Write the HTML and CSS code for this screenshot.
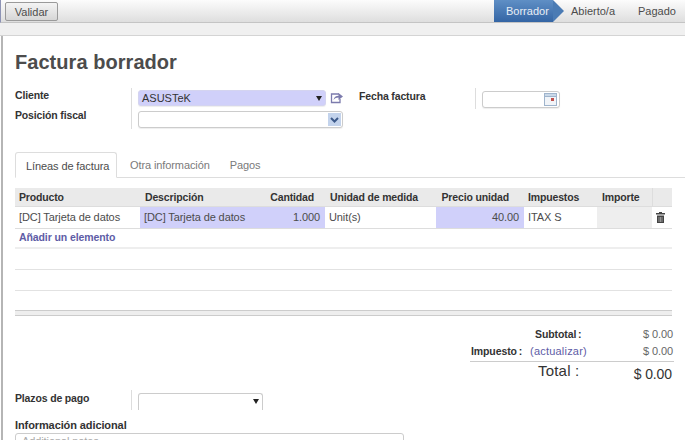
FILE: index.html
```html
<!DOCTYPE html>
<html lang="es">
<head>
	<meta charset="UTF-8">
	<title>Factura borrador</title>
	<link rel="stylesheet" href="styles.css">
</head>
<body>
	<div class="topbar">
		<button class="btn">Validar</button>
		<ul class="states">
			<li class="state active">Borrador</li>
			<li class="state">Abierto/a</li>
			<li class="state">Pagado</li>
		</ul>
	</div>
	<div class="band"></div>
	<div class="sheet">
		<h1>Factura borrador</h1>
		<div class="head_form">
			<div class="group group_left">
				<label class="lbl">Cliente</label>
				<div class="val val_client">
					<div class="field blue client">ASUSTeK<span class="caret"></span></div>
					<svg class="ext" width="13" height="12" viewBox="0 0 13 12"><path d="M9 2H1.500V10.500H10V7" fill="none" stroke="#7c7bad" stroke-width="1.300"/><path d="M3.500 8C4 5 6 3.800 8.500 3.800V1L13 4.500 8.500 8V5.500C6.500 5.500 5 6.200 3.500 8Z" fill="#7c7bad"/></svg>
				</div>
				<label class="lbl low">Posición fiscal</label>
				<div class="val val_fiscal">
					<div class="field fiscal"><span class="sel_btn"><svg width="9" height="6" viewBox="0 0 9 6"><path d="M1 1L4.500 4.500 8 1" fill="none" stroke="#3d5a8a" stroke-width="2"/></svg></span></div>
				</div>
			</div>
			<div class="group group_right">
				<label class="lbl mid">Fecha factura</label>
				<div class="val val_date">
					<div class="field date"><svg class="cal" width="13" height="13" viewBox="0 0 13 13"><rect width="13" height="13" fill="#9fb4cc"/><rect x="1" y="1" width="11" height="2" fill="#c9d8e8"/><rect x="1" y="4" width="11" height="8" fill="#f1f4f8"/><rect x="7" y="5" width="3" height="3" fill="#c0504d"/></svg></div>
				</div>
			</div>
		</div>
		<div class="tabs">
			<span class="tab active">Líneas de factura</span>
			<span class="tab">Otra información</span>
			<span class="tab">Pagos</span>
		</div>
		<table class="lines">
			<thead>
				<tr>
					<th class="c1">Producto</th>
					<th class="c2">Descripción</th>
					<th class="c3 num">Cantidad</th>
					<th class="c4">Unidad de medida</th>
					<th class="c5 num">Precio unidad</th>
					<th class="c6">Impuestos</th>
					<th class="c7">Importe</th>
					<th class="c8"></th>
				</tr>
			</thead>
			<tbody>
				<tr class="line">
					<td>[DC] Tarjeta de datos</td>
					<td class="req">[DC] Tarjeta de datos</td>
					<td class="req num">1.000</td>
					<td>Unit(s)</td>
					<td class="req num">40.00</td>
					<td>ITAX S</td>
					<td class="ro"></td>
					<td class="del"><svg width="9" height="11" viewBox="0 0 9 11"><path d="M3 0H6V1H9V2.500H0V1H3ZM1 3.500H8V11H1Z" fill="#444"/><path d="M3 5V10M4.500 5V10M6 5V10" stroke="#ccc" stroke-width=".6"/></svg></td>
				</tr>
				<tr class="add"><td colspan="8"><a>Añadir un elemento</a></td></tr>
				<tr class="empty"><td colspan="8"></td></tr>
				<tr class="empty"><td colspan="8"></td></tr>
			</tbody>
		</table>
		<div class="foot_line"></div>
		<div class="totals">
			<div class="t_row">
				<span class="t_lbl t_sub">Subtotal :</span>
				<span class="t_val">$ 0.00</span>
			</div>
			<div class="t_row">
				<span class="t_lbl t_tax">Impuesto :</span>
				<a class="t_link">(actualizar)</a>
				<span class="t_val">$ 0.00</span>
			</div>
			<div class="t_row t_total">
				<span class="t_big">Total :</span>
				<span class="t_bigval">$ 0.00</span>
			</div>
		</div>
		<div class="terms">
			<label class="lbl">Plazos de pago</label>
			<div class="val"><div class="field term"><span class="caret"></span></div></div>
		</div>
		<div class="notes_lbl">Información adicional</div>
		<div class="notes">Additional notes...</div>
	</div>
</body>
</html>
```

FILE: styles.css
```css
*{
	margin: 0;
	padding: 0;
	box-sizing: border-box;
}
html, body{
	height: 440px;
	overflow: hidden;
}
body{
	background: #fff;
	font-family: "Liberation Sans", Arial, sans-serif;
	font-size: 11px;
	letter-spacing: -.1px;
	color: #4c4c4c;
}
.topbar{
	height: 23px;
	display: flex;
	justify-content: space-between;
	background: linear-gradient(#fcfcfc, #dedede);
	border-bottom: 1px solid #c4c4c4;
	border-left: 1px solid #8d93b5;
	padding-left: 4px;
}
.btn{
	width: 53px;
	height: 19px;
	margin: 2px 0 0 0;
	border: 1px solid #9a9a9a;
	border-radius: 2px;
	background: linear-gradient(#f4f4f4, #d6d6d6);
	font: 11px "Liberation Sans", Arial, sans-serif;
	color: #4c4c4c;
}
.states{
	list-style-type: none;
	display: flex;
	height: 22px;
}
.state{
	line-height: 22px;
	color: #4c4c4c;
	padding-left: 18px;
	width: 70px;
	letter-spacing: 0;
}
.state:last-child{
	width: 62px;
	padding-left: 15px;
}
.state.active{
	width: 59px;
	padding-left: 12px;
	color: #e8eef6;
	background: linear-gradient(#5f8fc5, #3465a4);
	position: relative;
}
.state.active::after{
	content: "";
	position: absolute;
	left: 59px;
	top: 0;
	border-left: 11px solid #4a7bb4;
	border-top: 11px solid transparent;
	border-bottom: 11px solid transparent;
}
.band{
	height: 13px;
	background: #f0f0f0;
	background-image: radial-gradient(#e2e2e2 35%, transparent 40%);
	background-size: 2px 2px;
	border-bottom: 1px solid #d4d4d4;
}
.sheet{
	height: 404px;
	border-left: 2px solid #b5b5b5;
	margin-left: 1px;
	padding: 0 0 0 12px;
	overflow: hidden;
}
h1{
	font-size: 20px;
	line-height: 24px;
	letter-spacing: .05px;
	color: #4c4c4c;
	margin-top: 14px;
}
.head_form{
	display: flex;
	margin-top: 14px;
	height: 41px;
}
.group{
	display: grid;
	align-content: start;
}
.group_left{
	width: 344px;
	grid-template-columns: 116px 212px;
	grid-template-rows: 19px 22px;
}
.group_right{
	grid-template-columns: 116px 90px;
	grid-template-rows: 21px;
}
.lbl{
	font-weight: bold;
	font-size: 10.5px;
	letter-spacing: -.15px;
	color: #333;
	line-height: 14px;
	white-space: nowrap;
}
.lbl.low{
	line-height: 17px;
}
.lbl.mid{
	line-height: 16px;
}
.val{
	border-left: 1px solid #ddd;
	padding-left: 6px;
	display: flex;
	align-items: flex-start;
	gap: 4px;
}
.val_client{
	padding-top: 2px;
}
.val_fiscal{
	padding-top: 4px;
}
.val_date{
	padding-top: 3px;
}
.field{
	height: 17px;
	border: 1px solid #ccc;
	border-radius: 3px;
	background: #fff;
	position: relative;
	line-height: 15px;
	box-shadow: 0 1px 1px #eee;
}
.client{
	width: 188px;
	height: 16px;
	padding-left: 3px;
	color: #333;
	letter-spacing: 0;
	border-color: #d4d4f0;
}
.blue{
	background: #d0d0fa;
}
.ext{
	margin-top: 2px;
}
.caret{
	position: absolute;
	right: 3px;
	top: 5px;
	border-top: 5px solid #222;
	border-left: 3px solid transparent;
	border-right: 3px solid transparent;
}
.fiscal{
	width: 206px;
}
.sel_btn{
	position: absolute;
	right: 1px;
	top: 1px;
	width: 13px;
	height: 13px;
	background: #c3d3ec;
	display: flex;
	align-items: center;
	justify-content: center;
}
.date{
	width: 78px;
}
.cal{
	position: absolute;
	right: 2px;
	top: 1px;
}
.tabs{
	display: flex;
	height: 26px;
	margin-top: 23px;
	border-bottom: 1px solid #ddd;
	white-space: nowrap;
}
.tab{
	line-height: 26px;
	color: #7a7a7a;
	padding: 0 11px 0 13px;
}
.tab:last-child{
	padding-left: 9px;
}
.tab.active{
	width: 102px;
	height: 26px;
	padding: 0 10px;
	color: #4c4c4c;
	background: #fff;
	border: 1px solid #ddd;
	border-bottom: 1px solid #fff;
	border-radius: 3px 3px 0 0;
}
.lines{
	width: 657px;
	margin-top: 10px;
	border-collapse: collapse;
	table-layout: fixed;
}
.lines th{
	height: 18px;
	background: #eaeaea;
	border-bottom: 1px solid #ddd;
	color: #333;
	text-align: left;
	padding: 0 4px;
	font-size: 10.5px;
	letter-spacing: -.15px;
	white-space: nowrap;
}
.lines td{
	padding: 0 4px;
	white-space: nowrap;
	overflow: hidden;
	color: #4c4c4c;
}
.lines th.c2{
	padding-left: 5px;
}
.lines th.c3{
	padding-right: 11px;
}
.lines th.c4{
	padding-left: 5px;
}
.lines th.c5{
	padding: 0 15px 0 5px;
}
.lines th.c7{
	padding-left: 5px;
}
.lines th.c8{
	border-left: 1px solid #ddd;
}
.c1{ width: 125px; }
.c2{ width: 120px; }
.c3{ width: 65px; }
.c4{ width: 111px; }
.c5{ width: 88px; }
.c6{ width: 73px; }
.c7{ width: 55px; }
.c8{ width: 20px; }
.lines th.num, .lines td.num{
	text-align: right;
}
.lines td.num{
	padding-right: 5px;
}
.line td{
	height: 22px;
	border-bottom: 1px solid #ddd;
}
.lines td.req{
	background: #d0d0fa;
}
.lines td.ro{
	background: #eeeeee;
}
.lines td.del{
	padding: 3px 0 0 4px;
}
.lines .add td{
	height: 20px;
	padding-bottom: 2px;
	border-bottom: 2px solid #eee;
}
.add a, .t_link{
	color: #5e5ca6;
	font-weight: bold;
}
.add a{
	font-size: 10.5px;
}
.empty td{
	height: 21px;
	border-bottom: 1px solid #e2e2e2;
}
.foot_line{
	width: 657px;
	height: 6px;
	margin-top: 19px;
	background: #eee;
	border-top: 1px solid #ccc;
	border-bottom: 1px solid #ccc;
}
.totals{
	width: 204px;
	height: 62px;
	margin: 10px 0 0 455px;
}
.t_row{
	display: flex;
	height: 17px;
	line-height: 16px;
	position: relative;
}
.t_lbl{
	font-weight: bold;
	font-size: 10.5px;
	word-spacing: -1px;
	color: #333;
}
.t_sub{
	margin-left: 65px;
}
.t_tax{
	margin-left: 1px;
}
.t_link{
	margin-left: 8px;
	font-weight: normal;
	letter-spacing: .2px;
}
.t_val{
	margin-left: auto;
	margin-right: 1px;
	color: #666;
}
.t_total{
	height: 28px;
	border-top: 1px solid #ccc;
	margin-top: 1px;
}
.t_big{
	margin-left: 68px;
	font-size: 15px;
	line-height: 18px;
	letter-spacing: .2px;
	color: #333;
}
.t_bigval{
	margin-left: auto;
	margin-right: 2px;
	margin-top: 3px;
	font-size: 14px;
	line-height: 18px;
	color: #333;
}
.terms{
	display: grid;
	grid-template-columns: 116px 200px;
	height: 20px;
	margin-top: 2px;
}
.terms .lbl{
	line-height: 16px;
}
.term{
	width: 125px;
	height: 20px;
	margin-top: 3px;
	border-bottom: 0;
	border-radius: 3px 3px 0 0;
	box-shadow: none;
}
.terms .val{
	overflow: hidden;
}
.notes_lbl{
	font-weight: bold;
	font-size: 11px;
	color: #333;
	margin-top: 8px;
	line-height: 15px;
}
.notes{
	width: 389px;
	height: 30px;
	border: 1px solid #ccc;
	border-radius: 3px;
	padding: 0 6px;
	line-height: 15px;
	color: #aaa;
}
```
